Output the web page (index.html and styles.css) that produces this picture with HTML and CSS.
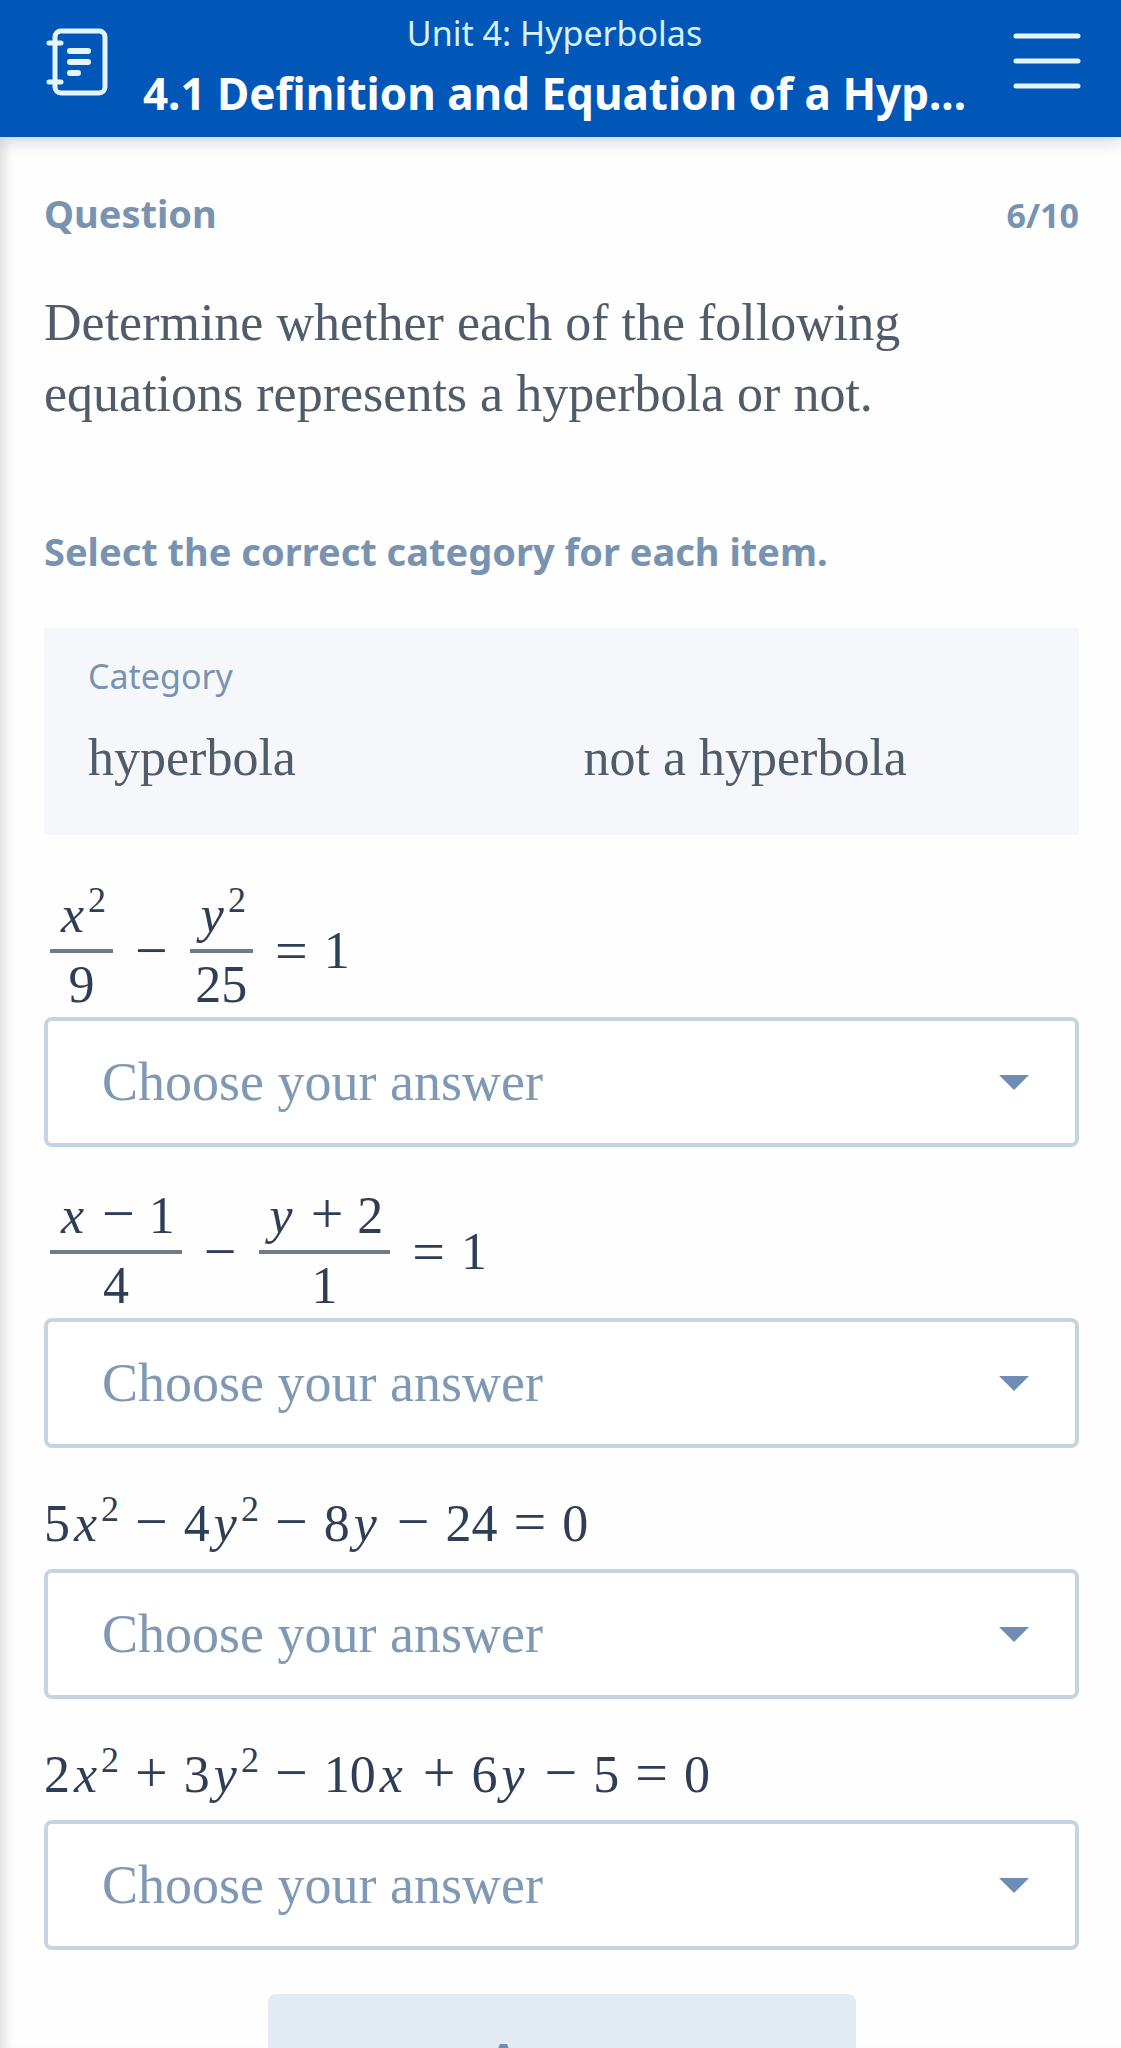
FILE: index.html
```html
<!DOCTYPE html>
<html lang="en">
<head>
    <meta charset="UTF-8">
    <meta name="viewport" content="width=device-width, initial-scale=1.0">
    <title>4.1 Definition and Equation of a Hyperbola</title>
    <link rel="stylesheet" href="styles.css">
</head>
<body>
    <header class="top-bar">
        <button type="button" class="icon-btn" aria-label="Lesson notes">
            <svg width="64" height="68" viewBox="0 0 64 68" fill="none" stroke="currentColor" stroke-width="5" stroke-linecap="round">
                <rect x="11" y="3" width="50" height="62" rx="6"/>
                <path d="M5 15h12M5 54h12"/>
                <path d="M26 23h18M26 34h18M26 45h8" stroke-width="6"/>
            </svg>
        </button>
        <div class="titles">
            <p class="unit">Unit 4: Hyperbolas</p>
            <h1 class="lesson">4.1 Definition and Equation of a Hyp...</h1>
        </div>
        <button type="button" class="icon-btn" aria-label="Menu">
            <svg width="68" height="56" viewBox="0 0 68 56" fill="none" stroke="currentColor" stroke-width="5" stroke-linecap="round">
                <path d="M3 3h62M3 28h62M3 53h62"/>
            </svg>
        </button>
    </header>

    <main class="content">
        <div class="question-head">
            <h2 class="label">Question</h2>
            <span class="counter">6/10</span>
        </div>

        <p class="prompt">Determine whether each of the following equations represents a hyperbola or not.</p>

        <h2 class="label">Select the correct category for each item.</h2>

        <section class="category">
            <h3 class="category-title">Category</h3>
            <ul class="category-list">
                <li>hyperbola</li>
                <li>not a hyperbola</li>
            </ul>
        </section>

        <form class="items">
            <div class="item">
                <label class="equation tall" for="item1">
                    <span class="frac"><span class="num"><i>x</i><sup>2</sup></span><span class="den">9</span></span>
                    <b>−</b>
                    <span class="frac"><span class="num"><i>y</i><sup>2</sup></span><span class="den">25</span></span>
                    <b>=</b>
                    <span>1</span>
                </label>
                <div class="select-box">
                    <select id="item1">
                        <option>Choose your answer</option>
                        <option>hyperbola</option>
                        <option>not a hyperbola</option>
                    </select>
                </div>
            </div>

            <div class="item">
                <label class="equation tall" for="item2">
                    <span class="frac"><span class="num"><i>x</i><b>−</b>1</span><span class="den">4</span></span>
                    <b>−</b>
                    <span class="frac"><span class="num"><i>y</i><b>+</b>2</span><span class="den">1</span></span>
                    <b>=</b>
                    <span>1</span>
                </label>
                <div class="select-box">
                    <select id="item2">
                        <option>Choose your answer</option>
                        <option>hyperbola</option>
                        <option>not a hyperbola</option>
                    </select>
                </div>
            </div>

            <div class="item">
                <label class="equation" for="item3">
                    <span>5<i>x</i><sup>2</sup><b>−</b>4<i>y</i><sup>2</sup><b>−</b>8<i>y</i><b>−</b>24<b>=</b>0</span>
                </label>
                <div class="select-box">
                    <select id="item3">
                        <option>Choose your answer</option>
                        <option>hyperbola</option>
                        <option>not a hyperbola</option>
                    </select>
                </div>
            </div>

            <div class="item">
                <label class="equation" for="item4">
                    <span>2<i>x</i><sup>2</sup><b>+</b>3<i>y</i><sup>2</sup><b>−</b>10<i>x</i><b>+</b>6<i>y</i><b>−</b>5<b>=</b>0</span>
                </label>
                <div class="select-box">
                    <select id="item4">
                        <option>Choose your answer</option>
                        <option>hyperbola</option>
                        <option>not a hyperbola</option>
                    </select>
                </div>
            </div>

            <button type="submit" class="answer-btn">Answer</button>
        </form>
    </main>
</body>
</html>
```

FILE: styles.css
```css
* {
    box-sizing: border-box;
}

body {
    margin: 0;
    height: 100vh;
    overflow: hidden;
    display: flex;
    flex-direction: column;
    background: #fefefe;
    color: #505c69;
    font-family: "Noto Sans", "Open Sans", sans-serif;
}

h1, h2, h3, p, ul {
    margin: 0;
    padding: 0;
}

button {
    font-family: inherit;
    border: none;
    cursor: pointer;
}

/* Header */
.top-bar {
    flex: none;
    display: flex;
    justify-content: space-between;
    padding: 3px 40px 0 44px;
    height: 137px;
    background: #0057b8;
    color: #fff;
    box-shadow: 0 4px 16px rgba(0, 40, 100, 0.2);
    z-index: 1;
}

.icon-btn {
    flex: none;
    display: flex;
    align-self: flex-start;
    padding: 25px 0;
    background: none;
    color: #e4f5ff;
}

.icon-btn:last-child {
    padding-top: 30px;
}

.titles {
    flex: 1;
    min-width: 0;
    padding: 0 32px 0 20px;
    text-align: center;
    white-space: nowrap;
}

.unit {
    font-size: 34px;
    line-height: 60px;
    color: #d8efff;
}

.lesson {
    font-size: 44px;
    line-height: 60px;
    font-weight: bold;
    overflow: hidden;
    text-overflow: ellipsis;
}

/* Question */
.content {
    flex: 1;
    min-height: 0;
    padding: 50px 42px 0 44px;
    box-shadow: inset 12px 0 12px -8px rgba(0, 0, 0, 0.14);
}

.question-head {
    display: flex;
    justify-content: space-between;
    align-items: baseline;
}

.label {
    font-size: 38px;
    line-height: 52px;
    color: #7893b1;
}

.counter {
    font-size: 34px;
    font-weight: bold;
    color: #7893b1;
}

.prompt {
    margin: 48px 0 96px;
    max-width: 940px;
    font-family: "Liberation Serif", serif;
    font-size: 52px;
    line-height: 71px;
}

.category {
    margin-top: 51px;
    padding: 22px 44px 28px;
    height: 207px;
    background: #f6f7fb;
}

.category-title {
    font-size: 34px;
    line-height: 52px;
    font-weight: normal;
    color: #7893b1;
}

.category-list {
    display: grid;
    grid-template-columns: 1fr 1fr;
    gap: 44px;
    margin-top: 26px;
    list-style: none;
    font-family: "Liberation Serif", serif;
    font-size: 52px;
    line-height: 60px;
}

/* Equations */
.items {
    display: flex;
    flex-direction: column;
    margin-top: 11px;
}

.equation {
    display: flex;
    align-items: center;
    height: 121px;
    padding-top: 30px;
    color: #2f3e57;
    font-family: "Liberation Serif", serif;
    font-size: 52px;
    line-height: 60px;
}

.equation.tall {
    height: 171px;
    padding-top: 38px;
}

.equation b {
    margin: 0 16px;
    font-size: 58px;
    font-weight: normal;
    line-height: 0;
}

.equation i {
    padding: 0 4px;
}

.equation sup {
    font-size: 36px;
    line-height: 0;
    vertical-align: 20px;
}

.frac {
    display: flex;
    flex-direction: column;
    margin: 0 6px;
    text-align: center;
}

.num {
    padding: 0 7px 4px;
    border-bottom: 4px solid #6d7b8f;
}

.den {
    line-height: 64px;
}

.num b {
    margin: 0 14px;
}

.select-box {
    position: relative;
}

.select-box::after {
    content: '';
    position: absolute;
    top: 58px;
    right: 50px;
    border: 15px solid transparent;
    border-top-color: #6f8cb4;
    border-bottom: none;
    pointer-events: none;
}

.select-box select {
    display: block;
    width: 100%;
    height: 130px;
    padding: 0 100px 0 54px;
    appearance: none;
    background: #fff;
    border: 4px solid #c6d3e1;
    border-radius: 8px;
    color: #7f99b5;
    font-family: "Liberation Serif", serif;
    font-size: 54px;
}

.answer-btn {
    align-self: center;
    width: 588px;
    max-width: 100%;
    height: 124px;
    margin-top: 44px;
    background: #e2eaf4;
    border-radius: 8px;
    color: #6f8cb4;
    font-size: 38px;
    font-weight: bold;
}
```
